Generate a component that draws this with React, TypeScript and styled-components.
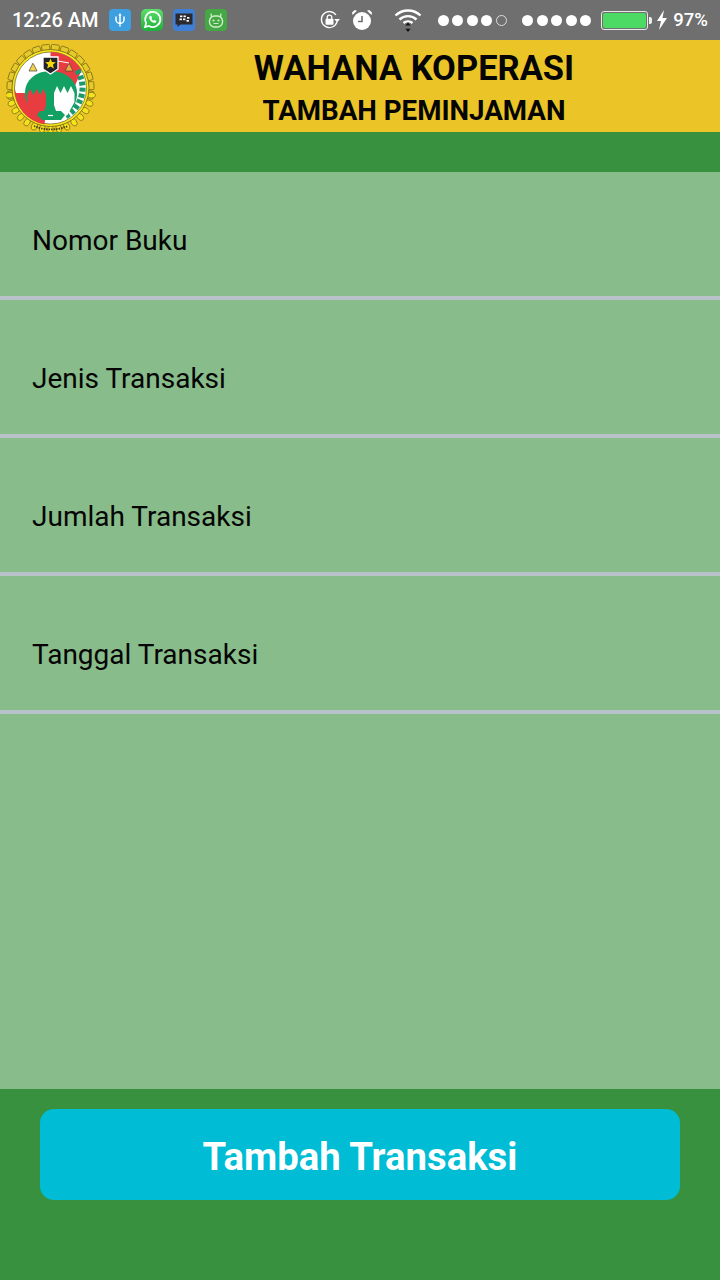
import React from "react";
import styled, { createGlobalStyle } from "styled-components";

const Global = createGlobalStyle`
  html, body { margin: 0; padding: 0; background: #88bc8a; }
  * { box-sizing: border-box; }
`;
const Page = styled.div`
  width: 720px; height: 1280px; display: flex; flex-direction: column;
  font-family: Roboto, "Liberation Sans", sans-serif; overflow: hidden; background: #88bc8a;
`;
const StatusBar = styled.div`
  height: 40px; background: #6f6f6f; display: flex; align-items: center; padding: 0 12px; color: #fff; flex: none;
`;
const Time = styled.span`font-size: 20px; font-weight: 500; width: 97px; white-space: nowrap;`;
const AppIcons = styled.div`display: flex; gap: 10px; align-items: center;`;
const AppIcon = styled.svg`width: 22px; height: 22px; display: block;`;
const StatusRight = styled.div`margin-left: auto; display: flex; align-items: center;`;
const Dots = styled.div<{ $ml: number }>`display: flex; gap: 3.6px; margin-left: ${(p) => p.$ml}px;`;
const Dot = styled.span<{ $off?: boolean }>`
  width: 11px; height: 11px; border-radius: 50%;
  background: ${(p) => (p.$off ? "transparent" : "#fff")};
  border: ${(p) => (p.$off ? "1.5px solid #ddd" : "none")};
`;
const Battery = styled.div`
  width: 47px; height: 19px; border: 1px solid #e8e8e8; border-radius: 3px; margin-left: 10px; padding: 1px; position: relative;
  &::after { content: ""; position: absolute; right: -5px; top: 5px; width: 3px; height: 7px; background: #eee; border-radius: 0 2px 2px 0; }
`;
const BatteryFill = styled.div`height: 100%; background: #4cd964; border-radius: 2px;`;
const Percent = styled.span`font-size: 18.5px; font-weight: 500; margin-left: 5px;`;

const Header = styled.div`
  height: 92px; background: #ebc527; flex: none; display: flex;
`;
const LogoSlot = styled.div`width: 108px; flex: none; padding: 3px 0 0 6px;`;
const Titles = styled.div`flex: 1; display: flex; flex-direction: column; align-items: center;`;
const Title = styled.div`font-size: 34.5px; font-weight: 700; line-height: 41px; margin-top: 8px; color: #050505; white-space: nowrap;`;
const Subtitle = styled.div`font-size: 27.7px; font-weight: 700; line-height: 33px; margin-top: 5px; color: #050505; white-space: nowrap;`;
const Band = styled.div`height: 40px; background: #38913e; flex: none;`;
const List = styled.div`flex: 1; background: #88bc8a;`;
const Row = styled.div<{ $h: number; $pt: number }>`
  height: ${(p) => p.$h}px; padding: ${(p) => p.$pt}px 32px 0; display: flex; align-items: center;
  border-bottom: 4px solid #b9c2cb; font-size: 28px; color: #050505;
`;
const Footer = styled.div`height: 191px; background: #38913e; flex: none; padding: 20px 40px 0;`;
const Action = styled.div`
  height: 91px; padding-top: 3px; background: #00bcd4; border-radius: 14px; color: #fff; font-size: 38.3px; font-weight: 700;
  display: flex; align-items: center; justify-content: center;
`;
const Logo = styled.svg`width: 90px; height: 90px; display: block;`;

const gearTeeth = Array.from({ length: 16 }, (_, i) => -100 + (i * 200) / 15);
const grains = Array.from({ length: 15 }, (_, i) => 100 + (i * 160) / 14);
const ticks = Array.from({ length: 9 }, (_, i) => 20 + i * 11);

export default function App() {
  return (
    <Page>
      <Global />
      <StatusBar>
        <Time>12:26 AM</Time>
        <AppIcons>
          <AppIcon viewBox="0 0 22 22">
            <rect width="22" height="22" rx="4" fill="#3d9ee0" />
            <path d="M11 5.500V17.500M7 7.500v3a4 4 0 0 0 8 0v-3" fill="none" stroke="#fff" strokeWidth="1.5" />
            <path d="M11 4l1.600 2.500h-3.200z" fill="#fff" />
          </AppIcon>
          <AppIcon viewBox="0 0 22 22">
            <defs>
              <linearGradient id="wa" x1="0" y1="0" x2="0" y2="1">
                <stop offset="0" stopColor="#5be06a" />
                <stop offset="1" stopColor="#1cb03a" />
              </linearGradient>
            </defs>
            <rect width="22" height="22" rx="5" fill="url(#wa)" />
            <path d="M4 18l1.200-3.800A7.600 7.600 0 1 1 8 17z" fill="none" stroke="#fff" strokeWidth="1.7" />
            <path d="M8.300 7.500c-.6 3.400 3 6.900 6.300 6.300l.9-1.700-2.200-1.100-.9.800c-.9-.4-1.600-1.100-2-2l.8-.9-1.100-2.200z" fill="#fff" />
          </AppIcon>
          <AppIcon viewBox="0 0 22 22">
            <rect width="22" height="22" rx="4" fill="#3f7fd6" />
            <path d="M2.500 4.500h17v11h-12l-3 2.500v-2.500h-2z" fill="#2a2a2e" />
            <g fill="#fff">
              <rect x="7" y="6.500" width="2.400" height="1.700" />
              <rect x="10.500" y="6.500" width="2.400" height="1.700" />
              <rect x="6.500" y="9.500" width="2.400" height="1.700" />
              <rect x="10" y="9.500" width="2.400" height="1.700" />
              <rect x="14" y="8" width="2.400" height="1.700" />
              <rect x="13.500" y="11" width="2.400" height="1.700" />
            </g>
          </AppIcon>
          <AppIcon viewBox="0 0 22 22">
            <rect width="22" height="22" rx="4" fill="#46a844" />
            <rect x="4.500" y="7" width="13" height="11" rx="5" fill="none" stroke="#cfeecb" strokeWidth="1.4" />
            <path d="M6.500 8 6 4.500M15.500 8 16 4.500" stroke="#cfeecb" strokeWidth="1.3" />
            <circle cx="8.500" cy="11.500" r="1.100" fill="#cfeecb" />
            <circle cx="13.500" cy="11.500" r="1.100" fill="#cfeecb" />
            <path d="M8.500 14.500h5" stroke="#cfeecb" strokeWidth="1" />
          </AppIcon>
        </AppIcons>
        <StatusRight>
          <svg width="22" height="22" viewBox="0 0 22 22">
            <path d="M18 13A8 8 0 1 1 17 6" fill="none" stroke="#fff" strokeWidth="1.300" />
            <path d="M21 10 18 13.500 15.200 10z" fill="#fff" />
            <rect x="6.500" y="9.800" width="8" height="6" rx="1" fill="#fff" />
            <path d="M8.200 10V8.400a2.300 2.300 0 0 1 4.600 0V10" fill="none" stroke="#fff" strokeWidth="1.300" />
          </svg>
          <svg width="24" height="24" viewBox="0 0 24 24" style={{ marginLeft: 9 }}>
            <circle cx="12" cy="13" r="9" fill="#fff" />
            <path d="M12 8v5.500H8" fill="none" stroke="#6f6f6f" strokeWidth="1.600" />
            <path d="M2.500 7 7 2.800 4.800 2 2 4.500zM21.500 7 17 2.800l2.200-.8L22 4.500z" fill="#fff" />
          </svg>
          <svg width="28" height="26" viewBox="0 0 28 26" style={{ marginLeft: 20 }}>
            <path d="M1.500 8.500a18 18 0 0 1 25 0M5.500 12.500a12.500 12.500 0 0 1 17 0M9.500 16a7 7 0 0 1 9 0" fill="none" stroke="#fff" strokeWidth="2.400" />
            <path d="M14 15.500l2.600 3h-5.200zM14 25l-2.600-3.200h5.200z" fill="#111" />
          </svg>
          <Dots $ml={16}>
            <Dot /><Dot /><Dot /><Dot /><Dot $off />
          </Dots>
          <Dots $ml={15}>
            <Dot /><Dot /><Dot /><Dot /><Dot />
          </Dots>
          <Battery><BatteryFill /></Battery>
          <svg width="12" height="20" viewBox="0 0 12 20" style={{ marginLeft: 8 }}>
            <path d="M8 0 1 11h4l-2 9 8-12H6.500z" fill="#fff" />
          </svg>
          <Percent>97%</Percent>
        </StatusRight>
      </StatusBar>
      <Header>
        <LogoSlot>
          <Logo viewBox="0 0 90 90">
            {gearTeeth.map((a) => (
              <rect key={a} x="40.500" y="1.500" width="8" height="7" rx="1" fill="#e6c92a" stroke="#7d6d16" strokeWidth="0.8" transform={`rotate(${a} 44.500 45)`} />
            ))}
            {grains.map((a) => (
              <ellipse key={a} cx="44.500" cy="3.500" rx="2.800" ry="4" fill="#f6e21c" stroke="#77691a" strokeWidth="0.7" transform={`rotate(${a} 44.500 45)`} />
            ))}
            <circle cx="44.500" cy="45" r="38.500" fill="#f8e61f" stroke="#6e6414" strokeWidth="0.8" />
            <circle cx="44.500" cy="45" r="36" fill="#fff" stroke="#4c4a14" strokeWidth="0.6" />
            <path d="M44.500 9a36 36 0 0 1 31 18L66 50H44.500z" fill="#e93c40" />
            <path d="M8.500 46a36 36 0 0 0 30 35.500L42 50H10z" fill="#e93c40" />
            {ticks.map((a) => (
              <rect key={a} x="42.500" y="10" width="4" height="6" fill="#1a9a6c" transform={`rotate(${a + 40} 44.500 45)`} />
            ))}
            <path d="M19 50c0-13 11-22 25.500-22S71 37 71 50c0 8-3 14-7 18H26c-4-4-7-10-7-18z" fill="#12a063" />
            <path d="M21 52l3.200-6 3.300 6 3.300-6 3.200 6 3.300-6 2.700 6v11l-2 5 4 8H36c-7 0-15-7-15-14z" fill="#e93c40" />
            <path d="M48 50l3-7 3.500 7 3.500-7 3.500 7 3.500-7 3.500 7v9l-7 13-8 4H47l3-8-2-6z" fill="#fff" />
            <path d="M34 68h21l4 4-4 5H36l-5-5z" fill="#12a063" />
            <path d="M42 72.500h5" stroke="#fff" strokeWidth="1.200" />
            <path d="M28 83c10 4.500 24 4.500 34 0" stroke="#45401a" strokeWidth="1.800" strokeDasharray="1.500 1" fill="none" />
            <path d="M37 14h15v12l-7.500 5L37 26z" fill="#23232b" stroke="#fff" strokeWidth="1.300" />
            <path d="M44.500 15.500l1.500 3.500 3.800.3-2.900 2.400 1 3.700-3.400-2-3.400 2 1-3.700-2.900-2.400 3.800-.3z" fill="#f5d90a" />
            <path d="M23 28l4-8 4 8z" fill="#f3d24a" stroke="#444" strokeWidth="0.7" />
            <path d="M59 28l4-8 4 8z" fill="#f2a83a" stroke="#444" strokeWidth="0.7" />
            <path d="M27 20 37 18M52 18 63 20" stroke="#fff" strokeWidth="1" />
          </Logo>
        </LogoSlot>
        <Titles>
          <Title>WAHANA KOPERASI</Title>
          <Subtitle>TAMBAH PEMINJAMAN</Subtitle>
        </Titles>
      </Header>
      <Band />
      <List>
        <Row $h={128} $pt={12}>Nomor Buku</Row>
        <Row $h={138} $pt={22}>Jenis Transaksi</Row>
        <Row $h={138} $pt={22}>Jumlah Transaksi</Row>
        <Row $h={138} $pt={22}>Tanggal Transaksi</Row>
      </List>
      <Footer>
        <Action>Tambah Transaksi</Action>
      </Footer>
    </Page>
  );
}
